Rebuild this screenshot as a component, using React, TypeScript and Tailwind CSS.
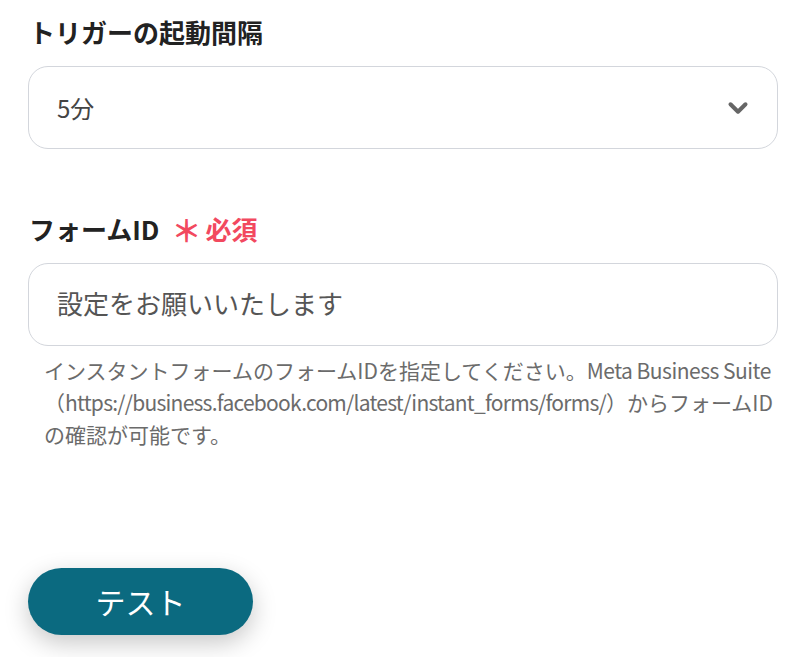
import { ChevronDown } from "lucide-react";

const font = { fontFamily: '"Noto Sans CJK JP", "Noto Sans", sans-serif' };

export default function App() {
  return (
    <div className="min-h-screen bg-white text-[#222]" style={font}>
      <div className="pl-[28px] pr-[28px] pt-[14px]">
        {/* Trigger interval */}
        <div className="flex flex-col">
          <label className="pl-[1px] text-[26px] font-bold leading-[36px] text-[#222]">
            トリガーの起動間隔
          </label>
          <div className="mt-[16px] flex h-[83px] items-center justify-between rounded-[20px] border border-[#d3d6dc] pl-[28px] pr-[24px]">
            <span className="text-[24px] text-[#444]">5分</span>
            <ChevronDown className="h-[30px] w-[30px] text-[#666]" strokeWidth={3.2} />
          </div>
        </div>

        {/* Form ID */}
        <div className="mt-[62px] flex flex-col">
          <label className="flex items-center gap-[12px] pl-[1px] text-[26px] font-bold leading-[36px]">
            <span className="text-[#222]">フォームID</span>
            <span className="flex items-center gap-[4px] text-[#f2495f]">
              <span className="text-[30px] leading-none">＊</span>
              <span>必須</span>
            </span>
          </label>
          <div className="mt-[16px] flex h-[83px] items-center rounded-[20px] border border-[#d3d6dc] pl-[28px] pr-[26px]">
            <span className="-mt-[4px] text-[26px] text-[#555]">設定をお願いいたします</span>
          </div>
          <p className="mt-[8px] whitespace-nowrap pl-[16px] text-[21px] leading-[32px] text-[#6b6b6b]">
            インスタントフォームのフォームIDを指定してください。<span className="tracking-[-0.5px]">Meta Business Suite</span>
            <br />
            （<span className="tracking-[-0.75px]">https://business.facebook.com/latest/instant_forms/forms/</span>）からフォームID
            <br />
            の確認が可能です。
          </p>
        </div>

        {/* Test button */}
        <div className="mt-[118px]">
          <button className="flex h-[67px] w-[225px] items-center justify-center rounded-full bg-[#0b6a80] text-[30px] text-white shadow-[0_8px_24px_rgba(0,0,0,0.22)]">
            テスト
          </button>
        </div>
      </div>
    </div>
  );
}
